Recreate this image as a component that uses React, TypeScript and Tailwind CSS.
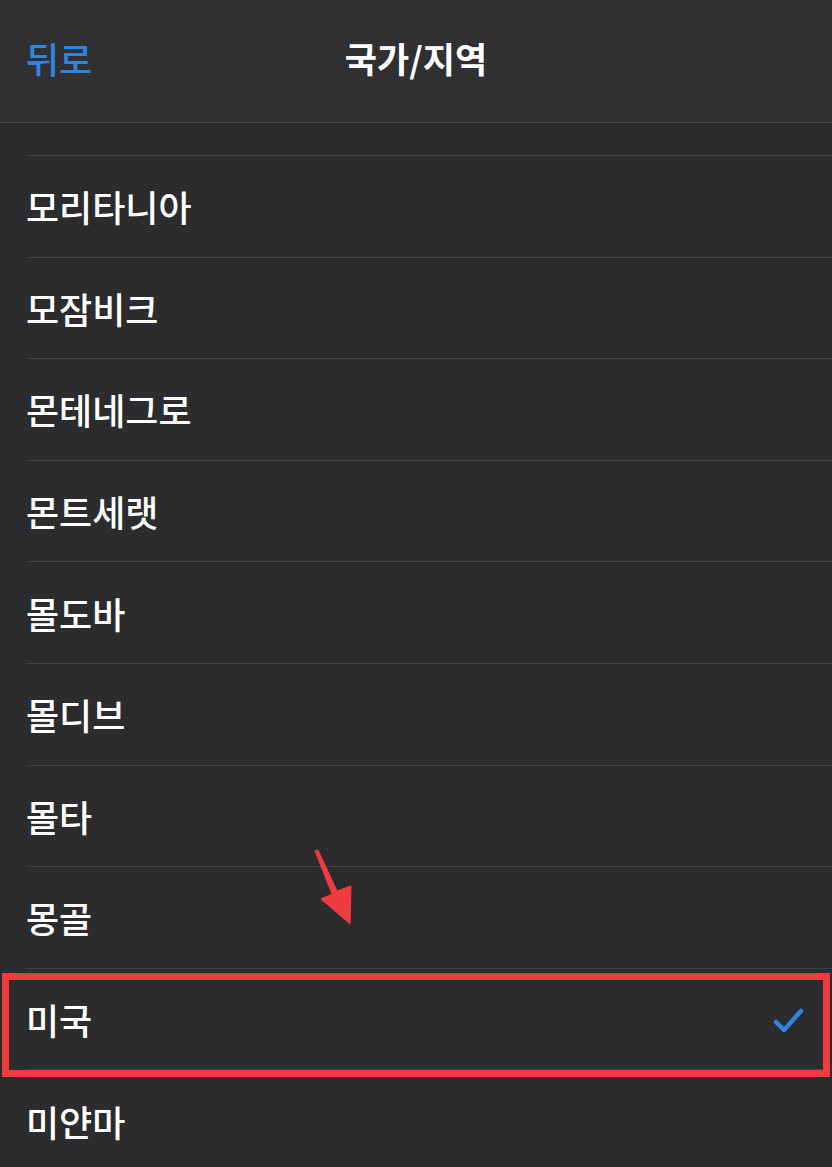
const countries = [
  "모리타니아",
  "모잠비크",
  "몬테네그로",
  "몬트세랫",
  "몰도바",
  "몰디브",
  "몰타",
  "몽골",
  "미국",
  "미얀마",
];

export default function App() {
  return (
    <div
      className="relative h-[1167px] w-[832px] overflow-hidden bg-[#2c2c2e] text-white"
      style={{ fontFamily: '"Noto Sans CJK KR", "Noto Sans", sans-serif' }}
    >
      <header className="relative flex h-[123px] items-center border-b border-[#454548] bg-[#303032] px-[26px] pb-[6px]">
        <span className="text-[36px] font-medium leading-none text-[#2f86e0]">뒤로</span>
        <h1 className="absolute left-1/2 top-[40px] -translate-x-1/2 text-[35px] font-bold leading-none">
          국가/지역
        </h1>
      </header>
      <div className="h-[32px]" />
      <ul className="pl-[26px]">
        {countries.map((name) => (
          <li
            key={name}
            className="flex h-[101.6px] items-center justify-between border-t border-[#424245] pr-[27px]"
          >
            <span className="text-[36px] font-medium leading-none">{name}</span>
            {name === "미국" && (
              <svg width="32" height="28" viewBox="0 0 32 28" className="mt-[2px]">
                <path
                  d="M3 16 L11 24 L28 5"
                  fill="none"
                  stroke="#2f86e0"
                  strokeWidth="4.5"
                  strokeLinecap="round"
                  strokeLinejoin="round"
                />
              </svg>
            )}
          </li>
        ))}
      </ul>

      {/* highlight box */}
      <div className="absolute left-[2px] top-[973px] h-[104px] w-[828px] border-[7px] border-[#f23b3f]" />

      {/* pointer arrow */}
      <svg className="absolute left-[290px] top-[840px]" width="80" height="100" viewBox="0 0 80 100">
        <path
          d="M25 11 L28 10 L47 51 L61 46 L60 84 L31 59 L42 54 Z"
          fill="#f23b3f"
          stroke="#f23b3f"
          strokeWidth="1"
          strokeLinejoin="round"
        />
      </svg>
    </div>
  );
}
